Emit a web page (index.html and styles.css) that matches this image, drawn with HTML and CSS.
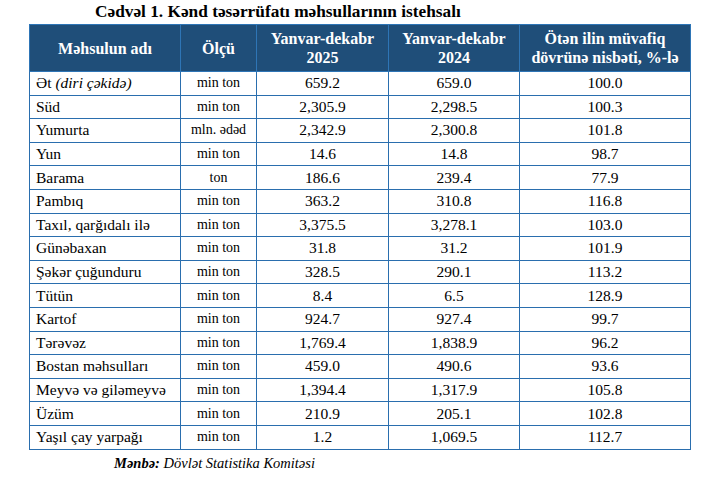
FILE: index.html
```html
<!DOCTYPE html>
<html lang="az">
<head>
<meta charset="utf-8">
<title>Cədvəl 1</title>
<link rel="stylesheet" href="styles.css">
</head>
<body>
<div class="page">
  <h1 class="title">Cədvəl 1. Kənd təsərrüfatı məhsullarının istehsalı</h1>
  <table class="data">
    <colgroup>
      <col class="c1"><col class="c2"><col class="c3"><col class="c4"><col class="c5">
    </colgroup>
    <thead>
      <tr>
        <th>Məhsulun adı</th>
        <th>Ölçü</th>
        <th>Yanvar-dekabr<br>2025</th>
        <th>Yanvar-dekabr<br>2024</th>
        <th>Ötən ilin müvafiq<br>dövrünə nisbəti, %-lə</th>
      </tr>
    </thead>
    <tbody>
      <tr><td class="name">Ət <i>(diri çəkidə)</i></td><td class="unit">min ton</td><td>659.2</td><td>659.0</td><td>100.0</td></tr>
      <tr><td class="name">Süd</td><td class="unit">min ton</td><td>2,305.9</td><td>2,298.5</td><td>100.3</td></tr>
      <tr><td class="name">Yumurta</td><td class="unit">mln. ədəd</td><td>2,342.9</td><td>2,300.8</td><td>101.8</td></tr>
      <tr><td class="name">Yun</td><td class="unit">min ton</td><td>14.6</td><td>14.8</td><td>98.7</td></tr>
      <tr><td class="name">Barama</td><td class="unit">ton</td><td>186.6</td><td>239.4</td><td>77.9</td></tr>
      <tr><td class="name">Pambıq</td><td class="unit">min ton</td><td>363.2</td><td>310.8</td><td>116.8</td></tr>
      <tr><td class="name">Taxıl, qarğıdalı ilə</td><td class="unit">min ton</td><td>3,375.5</td><td>3,278.1</td><td>103.0</td></tr>
      <tr><td class="name">Günəbaxan</td><td class="unit">min ton</td><td>31.8</td><td>31.2</td><td>101.9</td></tr>
      <tr><td class="name">Şəkər çuğunduru</td><td class="unit">min ton</td><td>328.5</td><td>290.1</td><td>113.2</td></tr>
      <tr><td class="name">Tütün</td><td class="unit">min ton</td><td>8.4</td><td>6.5</td><td>128.9</td></tr>
      <tr><td class="name">Kartof</td><td class="unit">min ton</td><td>924.7</td><td>927.4</td><td>99.7</td></tr>
      <tr><td class="name">Tərəvəz</td><td class="unit">min ton</td><td>1,769.4</td><td>1,838.9</td><td>96.2</td></tr>
      <tr><td class="name">Bostan məhsulları</td><td class="unit">min ton</td><td>459.0</td><td>490.6</td><td>93.6</td></tr>
      <tr><td class="name">Meyvə və giləmeyvə</td><td class="unit">min ton</td><td>1,394.4</td><td>1,317.9</td><td>105.8</td></tr>
      <tr><td class="name">Üzüm</td><td class="unit">min ton</td><td>210.9</td><td>205.1</td><td>102.8</td></tr>
      <tr><td class="name">Yaşıl çay yarpağı</td><td class="unit">min ton</td><td>1.2</td><td>1,069.5</td><td>112.7</td></tr>
    </tbody>
  </table>
  <p class="source"><b>Mənbə:</b> Dövlət Statistika Komitəsi</p>
</div>
</body>
</html>
```

FILE: styles.css
```css
html, body {
  margin: 0;
  padding: 0;
  background: #ffffff;
}
body {
  font-family: "Liberation Serif", "Times New Roman", serif;
  color: #000000;
}
.page {
  width: 720px;
  height: 479px;
  overflow: hidden;
}
.title {
  margin: 0;
  padding-left: 95px;
  font-size: 17.3px;
  font-weight: bold;
  line-height: 24px;
  height: 24px;
}
.data {
  margin-left: 29px;
  width: 661px;
  border-collapse: collapse;
  table-layout: fixed;
}
.c1 { width: 151px; }
.c2 { width: 76px; }
.c3 { width: 132px; }
.c4 { width: 131px; }
.c5 { width: 171px; }
.data th {
  background: #1f4e79;
  color: #ffffff;
  font-size: 16px;
  font-weight: bold;
  line-height: 19px;
  height: 46px;
  padding: 0;
  border: 1px solid #2e75b6;
  text-align: center;
  vertical-align: middle;
}
.data td {
  font-size: 15.5px;
  line-height: 18px;
  height: 22.6px;
  padding: 0;
  border: 1px solid #2a6eae;
  text-align: center;
  vertical-align: middle;
}
.data td.name {
  text-align: left;
  padding-left: 6px;
}
.data td.unit {
  font-size: 14px;
}
.source {
  margin: 4px 0 0 0;
  padding-left: 114px;
  font-size: 14.5px;
  font-style: italic;
  line-height: 18px;
}
```
